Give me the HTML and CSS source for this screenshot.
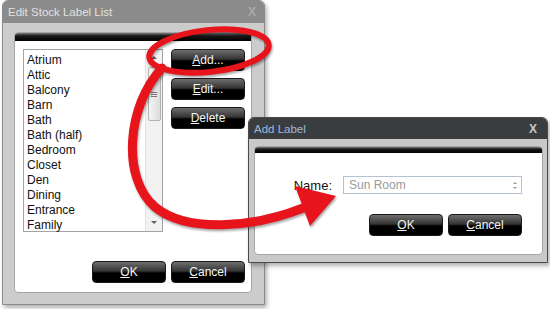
FILE: index.html
```html
<!DOCTYPE html>
<html lang="en">
<head>
    <meta charset="UTF-8">
    <title>Edit Stock Label List</title>
    <link rel="stylesheet" href="styles.css">
</head>
<body>

<div class="window list-window">
    <div class="title-bar">
        <span class="title">Edit Stock Label List</span>
        <span class="close">X</span>
    </div>
    <div class="panel">
        <div class="band"></div>
        <div class="panel-body">
            <div class="list-row">
                <div class="listbox">
                    <ul class="items">
                        <li>Atrium</li>
                        <li>Attic</li>
                        <li>Balcony</li>
                        <li>Barn</li>
                        <li>Bath</li>
                        <li>Bath (half)</li>
                        <li>Bedroom</li>
                        <li>Closet</li>
                        <li>Den</li>
                        <li>Dining</li>
                        <li>Entrance</li>
                        <li>Family</li>
                    </ul>
                    <div class="scrollbar">
                        <span class="arrow up"></span>
                        <span class="thumb"><i></i><i></i><i></i></span>
                        <span class="track"></span>
                        <span class="arrow down"></span>
                    </div>
                </div>
                <div class="side-buttons">
                    <button class="btn"><u>A</u>dd...</button>
                    <button class="btn"><u>E</u>dit...</button>
                    <button class="btn"><u>D</u>elete</button>
                </div>
            </div>
            <div class="footer">
                <button class="btn"><u>O</u>K</button>
                <button class="btn"><u>C</u>ancel</button>
            </div>
        </div>
    </div>
</div>

<div class="window add-window">
    <div class="title-bar">
        <span class="title">Add Label</span>
        <span class="close">X</span>
    </div>
    <div class="panel">
        <div class="band"></div>
        <div class="add-body">
            <div class="field">
                <span class="field-label">Name:</span>
                <div class="input">
                    <span class="input-text">Sun Room</span>
                    <span class="spin"><span class="arrow up"></span><span class="arrow down"></span></span>
                </div>
            </div>
            <div class="footer">
                <button class="btn"><u>O</u>K</button>
                <button class="btn"><u>C</u>ancel</button>
            </div>
        </div>
    </div>
</div>

<!-- red callout drawn on top of the screenshot -->
<svg class="callout" width="550" height="309" viewBox="0 0 550 309">
    <ellipse cx="209" cy="51" rx="60" ry="21" transform="rotate(-6 209 51)" fill="none" stroke="#e8141c" stroke-width="6"/>
    <path d="M 162 68 C 127 105, 121 178, 155 207 C 187 233, 252 228, 303 208" fill="none" stroke="#e8141c" stroke-width="9" stroke-linecap="round"/>
    <polygon points="295,186 336,196 310,226" fill="#e8141c"/>
</svg>

</body>
</html>
```

FILE: styles.css
```css
body {
    margin: 0;
    width: 550px;
    height: 309px;
    background: #ffffff;
    font-family: "Liberation Sans", Arial, sans-serif;
    font-size: 12px;
    position: relative;
    overflow: hidden;
}

.window {
    position: absolute;
    box-sizing: border-box;
    display: flex;
    flex-direction: column;
    border-radius: 6px 6px 0 0;
    box-shadow: 2px 3px 4px rgba(0, 0, 0, 0.3);
}

.list-window {
    left: 2px;
    top: 0;
    width: 263px;
    height: 305px;
    background: #cccccc;
    border: 1px solid #8a8a8a;
}

.add-window {
    left: 248px;
    top: 117px;
    width: 300px;
    height: 146px;
    background: #c9c9c9;
    border: 1px solid #4a4a4a;
}

.title-bar {
    display: flex;
    justify-content: space-between;
    align-items: center;
    padding: 0 8px 0 5px;
    border-radius: 5px 5px 0 0;
}

.list-window .title-bar {
    height: 22px;
    background: #8b8b8b;
    color: #e2e2e2;
}

.add-window .title-bar {
    height: 21px;
    background: #3a3d40;
    color: #9db8dc;
}

.title {
    font-size: 11.5px;
}

.close {
    font-size: 12px;
    font-weight: bold;
    color: #a9a9a9;
}

.add-window .close {
    color: #c8c8c8;
    margin-right: 2px;
}

.panel {
    flex: 1;
    display: flex;
    flex-direction: column;
    background: #ffffff;
    border-radius: 4px;
    border: 1px solid #a6a6a6;
}

.list-window .panel {
    margin: 9px 12px 11px 11px;
}

.add-window .panel {
    margin: 7px 4px 7px 5px;
}

.band {
    height: 8px;
    border-radius: 3px 3px 0 0;
    background: linear-gradient(#7a7a7a, #1a1a1a 35%, #000000);
}

.add-window .band {
    height: 6px;
}

.panel-body {
    flex: 1;
    display: flex;
    flex-direction: column;
    justify-content: space-between;
    padding: 8px 6px 9px 8px;
}

.list-row {
    display: flex;
    gap: 8px;
}

.listbox {
    width: 141px;
    height: 183px;
    box-sizing: border-box;
    border: 1px solid #a3a3a3;
    display: flex;
}

.items {
    flex: 1;
    list-style: none;
    margin: 0;
    padding: 3px 0 0 3px;
    color: #111111;
}

.items li {
    height: 15px;
    line-height: 15px;
}

.scrollbar {
    width: 16px;
    display: flex;
    flex-direction: column;
    align-items: center;
    background: #f2f2f2;
    border-left: 1px solid #e2e2e2;
}

.arrow {
    width: 0;
    height: 0;
    border-left: 3px solid transparent;
    border-right: 3px solid transparent;
}

.arrow.up {
    border-bottom: 3px solid #606060;
    margin: 6px 0 8px;
}

.arrow.down {
    border-top: 3px solid #606060;
    margin: 6px 0 7px;
}

.thumb {
    width: 13px;
    height: 54px;
    box-sizing: border-box;
    border: 1px solid #b2b2b2;
    border-radius: 2px;
    background: linear-gradient(90deg, #f4f4f4, #dcdcdc);
    display: flex;
    flex-direction: column;
    justify-content: center;
    align-items: center;
    gap: 1px;
}

.thumb i {
    width: 6px;
    height: 1px;
    background: #777777;
}

.track {
    flex: 1;
}

.side-buttons {
    display: flex;
    flex-direction: column;
    gap: 7px;
}

.btn {
    width: 74px;
    height: 22px;
    border: 1px solid #1a1a1a;
    border-radius: 4px;
    background: linear-gradient(#6e6e6e, #353535 45%, #000000 55%, #000000);
    color: #f4f4f4;
    font-family: "Liberation Sans", Arial, sans-serif;
    font-size: 12px;
    padding: 0;
}

.footer {
    display: flex;
    justify-content: flex-end;
    gap: 5px;
}

.add-body {
    flex: 1;
    display: flex;
    flex-direction: column;
    padding: 23px 20px 15px 10px;
    gap: 20px;
}

.field {
    display: flex;
    align-items: center;
    justify-content: flex-end;
    gap: 11px;
}

.field-label {
    font-size: 13px;
    color: #111111;
}

.input {
    width: 179px;
    height: 18px;
    box-sizing: border-box;
    border: 1px solid #b4c2d2;
    display: flex;
    align-items: center;
    justify-content: space-between;
    padding-left: 5px;
}

.input-text {
    color: #9a9a9a;
}

.spin {
    width: 12px;
    display: flex;
    flex-direction: column;
    align-items: center;
}

.spin .arrow {
    border-left-width: 2px;
    border-right-width: 2px;
}

.spin .arrow.up {
    border-bottom: 2px solid #9a9a9a;
    margin: 0 0 3px;
}

.spin .arrow.down {
    border-top: 2px solid #9a9a9a;
    margin: 0;
}

.callout {
    position: absolute;
    left: 0;
    top: 0;
    pointer-events: none;
    filter: drop-shadow(1px 2px 1px rgba(0, 0, 0, 0.35));
}
```
